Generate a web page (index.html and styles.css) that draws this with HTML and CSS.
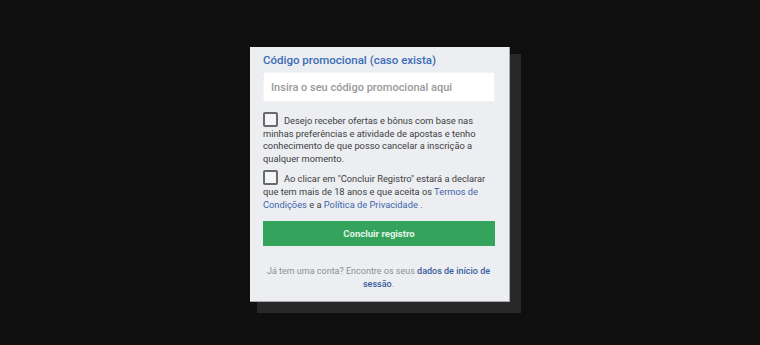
FILE: index.html
```html
<!DOCTYPE html>
<html lang="pt">
<head>
  <meta charset="UTF-8" />
  <meta name="viewport" content="width=device-width, initial-scale=1.0"/>
  <title>Registro</title>
  <link rel="stylesheet" href="styles.css">
</head>
<body>
  <div class="register-card">
    <!-- promo code -->
    <label class="promo-label" for="promo">Código promocional (caso exista)</label>
    <input type="text" id="promo" class="promo-input" placeholder="Insira o seu código promocional aqui">

    <!-- consents -->
    <div class="consent">
      <span class="box"></span>Desejo receber ofertas e bônus com base nas minhas preferências e atividade de apostas e tenho conhecimento de que posso cancelar a inscrição a qualquer momento.
    </div>
    <div class="consent">
      <span class="box"></span>Ao clicar em "Concluir Registro" estará a declarar que tem mais de 18 anos e que aceita os <a href="#">Termos de Condições</a> e a <a href="#">Política de Privacidade</a> .
    </div>

    <button class="submit">Concluir registro</button>

    <p class="login-hint">Já tem uma conta? Encontre os seus <a href="#">dados de início de sessão</a>.</p>
  </div>
</body>
</html>
```

FILE: styles.css
```css
* {
  box-sizing: border-box;
}

body {
  margin: 0;
  background: #0f0f0f;
  font-family: Roboto, "Liberation Sans", sans-serif;
  min-height: 345px;
}

.register-card {
  width: 260px;
  margin: 47px 0 0 250px;
  padding: 6px 15px 10px 13px;
  background: #eceef2;
  border-right: 1px solid #a8a8a8;
  border-bottom: 1px solid #a8a8a8;
  box-shadow: 9px 9px 0 2px #282828;
}

.promo-label {
  display: block;
  color: #3b6cb7;
  font-size: 11.5px;
  font-weight: 500;
  line-height: 14px;
}

.promo-input {
  display: block;
  width: 232px;
  height: 30px;
  margin: 5px 0 10px;
  padding: 0 7px;
  border: 1px dotted #e6e8ec;
  background: #fff;
  font-family: inherit;
  font-size: 11px;
  font-weight: 500;
  outline: none;
}

.promo-input::placeholder {
  color: #9a9a9a;
}

.consent {
  font-size: 9.3px;
  line-height: 12.6px;
  color: #404040;
  margin-bottom: 5px;
}

.consent .box {
  display: inline-block;
  width: 15px;
  height: 15px;
  border: 2px solid #6a6a6a;
  border-radius: 2px;
  background: #f4f5f7;
  vertical-align: -3px;
  margin-right: 6px;
}

.consent a {
  color: #3d65a9;
  text-decoration: none;
}

.submit {
  display: block;
  width: 232px;
  height: 25px;
  margin-top: 10px;
  border: none;
  background: #34a45c;
  color: #e4f3e8;
  font-family: inherit;
  font-size: 9.5px;
  font-weight: 700;
  cursor: pointer;
}

.login-hint {
  margin: 19px 0 0;
  text-align: center;
  font-size: 9px;
  line-height: 13px;
  color: #8d8f94;
}

.login-hint a {
  color: #3a5d9e;
  font-weight: 500;
  text-decoration: none;
}
```
